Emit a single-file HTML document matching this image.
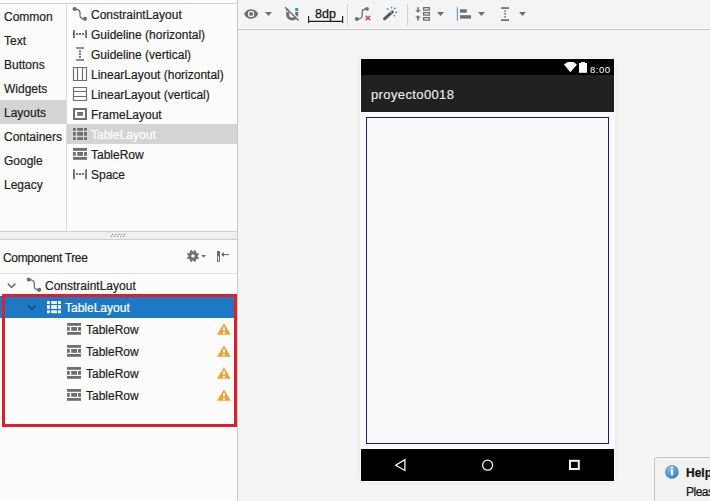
<!DOCTYPE html>
<html><head><meta charset="utf-8">
<style>
*{box-sizing:border-box;margin:0;padding:0}
html,body{width:710px;height:501px;overflow:hidden;background:#f5f5f5;font-family:"Liberation Sans",sans-serif;font-size:12px;color:#1e1e1e}
.a{position:absolute}
.t{position:absolute;white-space:nowrap;line-height:14px;height:14px;-webkit-text-stroke:0.2px currentColor}
svg{position:absolute;overflow:visible}
</style></head><body>
<!-- LEFT PANEL -->
<div class="a" style="left:0;top:0;width:237px;height:501px;background:#fcfcfc"></div>
<div class="a" style="left:0;top:3px;width:237px;height:1px;background:#cfcfcf"></div>
<div class="a" style="left:237px;top:0;width:1px;height:501px;background:#c8c8c8"></div>
<!-- categories -->
<div class="a" style="left:66px;top:4px;width:1px;height:227px;background:#d9d9d9"></div>
<div class="a" style="left:0;top:100px;width:66px;height:24px;background:#d4d4d4"></div>
<div class="t" style="left:4px;top:10px">Common</div>
<div class="t" style="left:4px;top:34px">Text</div>
<div class="t" style="left:4px;top:58px">Buttons</div>
<div class="t" style="left:4px;top:82px">Widgets</div>
<div class="t" style="left:4px;top:106px">Layouts</div>
<div class="t" style="left:4px;top:130px">Containers</div>
<div class="t" style="left:4px;top:154px">Google</div>
<div class="t" style="left:4px;top:178px">Legacy</div>
<!-- palette items -->
<div class="a" style="left:67px;top:124px;width:170px;height:20px;background:#d4d4d4"></div>
<div class="t" style="left:91px;top:8px">ConstraintLayout</div>
<div class="t" style="left:91px;top:28px">Guideline (horizontal)</div>
<div class="t" style="left:91px;top:48px">Guideline (vertical)</div>
<div class="t" style="left:91px;top:68px">LinearLayout (horizontal)</div>
<div class="t" style="left:91px;top:88px">LinearLayout (vertical)</div>
<div class="t" style="left:91px;top:108px">FrameLayout</div>
<div class="t" style="left:91px;top:128px;color:#fff">TableLayout</div>
<div class="t" style="left:91px;top:148px">TableRow</div>
<div class="t" style="left:91px;top:168px">Space</div>

<!-- splitter -->
<div class="a" style="left:0;top:231px;width:237px;height:1px;background:#cfcfcf"></div>
<div class="a" style="left:0;top:232px;width:237px;height:7px;background:#efefef"></div>
<div class="a" style="left:0;top:239px;width:237px;height:1px;background:#cfcfcf"></div>

<!-- component tree header -->
<div class="t" style="left:3px;top:251px;letter-spacing:-0.35px">Component Tree</div>
<div class="a" style="left:0;top:273px;width:237px;height:1px;background:#e0e0e0"></div>

<!-- tree -->
<div class="a" style="left:0;top:296px;width:237px;height:22px;background:#1e79c4"></div>
<div class="t" style="left:45px;top:279px">ConstraintLayout</div>
<div class="t" style="left:65px;top:301px;color:#fff">TableLayout</div>
<div class="t" style="left:86px;top:323px">TableRow</div>
<div class="t" style="left:86px;top:345px">TableRow</div>
<div class="t" style="left:86px;top:367px">TableRow</div>
<div class="t" style="left:86px;top:389px">TableRow</div>
<div class="a" style="left:2px;top:294px;width:235px;height:133px;border:3px solid #de1f2d"></div>

<!-- RIGHT: toolbar -->
<div class="a" style="left:238px;top:0;width:472px;height:29px;background:#f4f4f4"></div>
<div class="a" style="left:238px;top:28px;width:472px;height:1px;background:#f8f8f8"></div>
<div class="a" style="left:238px;top:29px;width:472px;height:1px;background:#c9c9c9"></div>

<!-- phone -->
<div class="a" style="left:360px;top:58px;width:255px;height:424px;background:#fcfcfc;box-shadow:0 0 5px rgba(0,0,0,0.07)"></div>
<div class="a" style="left:361px;top:112px;width:253px;height:337px;background:#fafafa"></div>
<div class="a" style="left:361px;top:59px;width:253px;height:16px;background:#000"></div>
<div class="a" style="left:361px;top:75px;width:253px;height:37px;background:#212121"></div>
<div class="t" style="left:371px;top:88px;font-size:13px;letter-spacing:0.38px;-webkit-text-stroke:0.15px #ececec;color:#ececec">proyecto0018</div>
<div class="a" style="left:366px;top:117px;width:243px;height:327px;border:1px solid #1a1a8a"></div>
<div class="a" style="left:361px;top:449px;width:253px;height:32px;background:#000"></div>

<div class="t" style="left:315px;top:7px;color:#111;font-size:12.5px;-webkit-text-stroke:0.25px #111">8dp</div>
<div class="t" style="left:590px;top:63px;font-size:9.5px;letter-spacing:0.5px;color:#fff;-webkit-text-stroke:0">8:00</div>
<!-- help popup -->
<div class="a" style="left:654px;top:457px;width:70px;height:60px;background:#f2f2f2;border:1px solid #c4c4c4;border-radius:3px"></div>
<div class="t" style="left:686px;top:466px;font-weight:bold;color:#111">Help</div>
<div class="t" style="left:686px;top:485px;color:#111;letter-spacing:-0.5px">Pleas</div>

<svg width="710" height="501" viewBox="0 0 710 501" style="left:0;top:0">
<g fill="#6e6e6e" stroke="none">
 <!-- palette: constraint -->
 <circle cx="74.6" cy="9" r="2.1"/><circle cx="85" cy="18.8" r="2.1"/>
 <path d="M74.6 9 C78.5 9.2 80 10 80 12.5 V15.5 C80 18 81.5 18.8 85 18.8" fill="none" stroke="#6e6e6e" stroke-width="1.3"/>
 <!-- guideline h -->
 <rect x="73" y="30" width="1.9" height="8"/><rect x="85.1" y="30" width="1.9" height="8"/>
 <rect x="76.1" y="33" width="2" height="2"/><rect x="79" y="33" width="2" height="2"/><rect x="82" y="33" width="2" height="2"/>
 <!-- guideline v -->
 <rect x="76.2" y="47.2" width="7.8" height="1.6"/><rect x="76.2" y="59.2" width="7.8" height="1.6"/>
 <rect x="79" y="50.4" width="2" height="1.8"/><rect x="79" y="53.2" width="2" height="1.8"/><rect x="79" y="56" width="2" height="1.8"/>
 <!-- linear h -->
 <path d="M73.5 67.5 H86.5 V80.5 H73.5 Z M77.5 67.5 V80.5 M82.5 67.5 V80.5" fill="none" stroke="#6e6e6e" stroke-width="1.15"/>
 <!-- linear v -->
 <path d="M73.5 87.5 H86.5 V100.5 H73.5 Z M73.5 91.5 H86.5 M73.5 96.5 H86.5" fill="none" stroke="#6e6e6e" stroke-width="1.15"/>
 <!-- frame -->
 <path d="M73 108 H87 V120 H73 Z M75 110 V118 H85 V110 Z" fill-rule="evenodd"/>
 <rect x="77.2" y="112" width="5.8" height="3.8"/>
 <!-- table layout -->
 <g id="tl">
 <rect x="73" y="128" width="2.8" height="2.7"/><rect x="77.2" y="128" width="5.8" height="2.7"/><rect x="84" y="128" width="3" height="2.7"/>
 <rect x="73" y="132" width="2.8" height="3.7"/><rect x="77.2" y="132" width="5.8" height="3.7"/><rect x="84" y="132" width="3" height="3.7"/>
 <rect x="73" y="137.2" width="2.8" height="2.8"/><rect x="77.2" y="137.2" width="5.8" height="2.8"/><rect x="84" y="137.2" width="3" height="2.8"/>
 </g>
 <!-- table row -->
 <g id="tr">
 <rect x="73" y="148" width="14" height="2.8"/>
 <rect x="73" y="152" width="2.8" height="3.8"/><rect x="77.2" y="152" width="5.8" height="3.8"/><rect x="84" y="152" width="3" height="3.8"/>
 <rect x="73" y="157" width="14" height="2.8"/>
 </g>
 <!-- space -->
 <rect x="73" y="169.2" width="1.9" height="10"/><rect x="85.1" y="169.2" width="1.9" height="10"/>
 <rect x="76.1" y="173" width="2" height="2"/><rect x="79" y="173" width="2" height="2"/><rect x="82" y="173" width="2" height="2"/>

 <!-- splitter dots -->
 <g fill="#8a8a8a">
 <rect x="112" y="233.8" width="1.2" height="1.2"/><rect x="115" y="233.8" width="1.2" height="1.2"/><rect x="118" y="233.8" width="1.2" height="1.2"/><rect x="121" y="233.8" width="1.2" height="1.2"/><rect x="124" y="233.8" width="1.2" height="1.2"/>
 <rect x="111" y="235.8" width="1.2" height="1.2"/><rect x="114" y="235.8" width="1.2" height="1.2"/><rect x="117" y="235.8" width="1.2" height="1.2"/><rect x="120" y="235.8" width="1.2" height="1.2"/><rect x="123" y="235.8" width="1.2" height="1.2"/>
 </g>

 <!-- gear -->
 <g transform="translate(193 256) rotate(22.5)">
  <path d="M4.50 -1.15 L6.00 -1.15 L6.00 1.15 L4.50 1.15 A4.50 4.50 0 0 1 4.00 2.37 L5.06 3.43 L3.43 5.06 L2.37 4.00 A4.50 4.50 0 0 1 1.15 4.50 L1.15 6.00 L-1.15 6.00 L-1.15 4.50 A4.50 4.50 0 0 1 -2.37 4.00 L-3.43 5.06 L-5.06 3.43 L-4.00 2.37 A4.50 4.50 0 0 1 -4.50 1.15 L-6.00 1.15 L-6.00 -1.15 L-4.50 -1.15 A4.50 4.50 0 0 1 -4.00 -2.37 L-5.06 -3.43 L-3.43 -5.06 L-2.37 -4.00 A4.50 4.50 0 0 1 -1.15 -4.50 L-1.15 -6.00 L1.15 -6.00 L1.15 -4.50 A4.50 4.50 0 0 1 2.37 -4.00 L3.43 -5.06 L5.06 -3.43 L4.00 -2.37 A4.50 4.50 0 0 1 4.50 -1.15 Z M0 -1.7 A1.7 1.7 0 1 0 0 1.7 A1.7 1.7 0 1 0 0 -1.7 Z" fill-rule="evenodd"/>
 </g>
 <path d="M201.3 255 H206 L203.6 257.8 Z"/>
 <!-- collapse -->
 <path d="M217 251 H220 V261.8 H217 Z M218 256.2 V260.8 H219 V256.2 Z" fill-rule="evenodd"/>
 <path d="M221 254.5 L224 252 V257 Z"/><rect x="223" y="254" width="6" height="1.1"/>

 <!-- tree chevrons -->
 <path d="M7.8 283.6 L11.6 287.4 L15.4 283.6" fill="none" stroke="#6e6e6e" stroke-width="1.5"/>
 <path d="M28 305.6 L31.8 309.2 L35.6 305.6" fill="none" stroke="#0d4a85" stroke-width="1.6"/>
 <!-- tree constraint -->
 <circle cx="28.8" cy="279.6" r="2.1"/><circle cx="39.2" cy="289.8" r="2.1"/>
 <path d="M28.8 279.6 C32.8 279.8 34.3 280.6 34.3 283 V286.5 C34.3 289 35.8 289.8 39.2 289.8" fill="none" stroke="#6e6e6e" stroke-width="1.3"/>
 <!-- tree table layout (white) -->
 <use href="#tl" transform="translate(-26 173.2)" fill="#fff"/>
 <!-- tree table rows -->
 <use href="#tr" transform="translate(-6 175)"/>
 <use href="#tr" transform="translate(-6 197)"/>
 <use href="#tr" transform="translate(-6 219)"/>
 <use href="#tr" transform="translate(-6 241)"/>
</g>
<!-- warnings -->
<g id="warn">
 <path d="M224 323.3 L230.8 334.8 H217 Z" fill="#eea236"/>
 <rect x="222.9" y="327.2" width="2.1" height="3.4" fill="#fff"/><rect x="222.9" y="332" width="2.1" height="1.8" fill="#fff"/>
</g>
<use href="#warn" transform="translate(0 22)"/>
<use href="#warn" transform="translate(0 44)"/>
<use href="#warn" transform="translate(0 66)"/>

<!-- TOOLBAR -->
<g fill="#6e6e6e">
 <g transform="translate(243.47 6.27) scale(0.636)">
  <path d="M12 4.5C7 4.5 2.73 7.61 1 12c1.73 4.39 6 7.5 11 7.5s9.27-3.11 11-7.5c-1.73-4.39-6-7.5-11-7.5z"/>
  <circle cx="12" cy="12" r="5" fill="#f4f4f4"/><circle cx="12" cy="12" r="3.1"/>
 </g>
 <path d="M265 12 H272 L268.5 16 Z"/>
 <path d="M437 12 H444 L440.5 16 Z"/>
 <path d="M478 12 H485 L481.5 16 Z"/>
 <path d="M519 12 H526 L522.5 16 Z"/>
 <!-- magnet -->
 <path d="M286.2 12 V15 A6 5.4 0 0 0 298.2 15 V12 H295.2 V15 A3 2.6 0 0 1 289.2 15 V12 Z"/>
 <rect x="295.2" y="8" width="3" height="3" fill="#3592d0"/>
 <rect x="286.2" y="8" width="3" height="3" fill="#4d6e84"/>
 <path d="M286 6.4 L299.6 20" stroke="#f4f4f4" stroke-width="1.6"/>
 <path d="M285.2 7.2 L298.6 20.6" stroke="#6a6a6a" stroke-width="1.4"/>
 <!-- 8dp bracket -->
 <path d="M308.6 16 V23 M308.6 21.4 H343 M342.6 16 V23" fill="none" stroke="#1e1e1e" stroke-width="1.2"/>
 <!-- separators -->
 <rect x="347" y="4" width="1" height="21.5" fill="#d2d2d2"/>
 <rect x="407" y="4" width="1" height="21.5" fill="#d2d2d2"/>
 <!-- clear constraints -->
 <circle cx="356.8" cy="19" r="1.9"/><circle cx="367" cy="8.8" r="1.9"/>
 <path d="M356.8 19 C360.5 19 362.2 18.2 362.2 15.5 V12.3 C362.2 9.6 363.5 8.8 367 8.8" fill="none" stroke="#6e6e6e" stroke-width="1.3"/>
 <path d="M365.6 15.8 L370.4 20.2 M370.4 15.8 L365.6 20.2" stroke="#c9385d" stroke-width="1.4"/>
 <!-- wand -->
 <path d="M384.5 18.8 L392.3 11.8" stroke="#5a5a5a" stroke-width="3" stroke-linecap="round"/>
 <rect x="390.6" y="11.6" width="1.2" height="1.2" fill="#ddd"/>
 <g stroke="#3d7fb1" stroke-width="1.2">
  <path d="M387.2 8.4 L388.4 9.8"/><path d="M391.6 6.8 V8.6"/><path d="M395.6 7.6 L394.4 9"/><path d="M395.2 12.4 H397.2"/><path d="M393.8 15.2 L395 16.4"/>
 </g>
 <!-- pack -->
 <rect x="417.2" y="7.2" width="1.6" height="3.4"/><path d="M415.2 10.2 H420.8 L418 12.8 Z"/>
 <rect x="417.2" y="17.4" width="1.6" height="3.2"/><path d="M415.2 17.8 H420.8 L418 15.2 Z"/>
 <path d="M423.6 7.6 H429.4 V10.2 H423.6 Z M423.6 12.6 H429.4 V15.2 H423.6 Z M423.6 17.6 H429.4 V20.2 H423.6 Z" fill="none" stroke="#6e6e6e" stroke-width="1.3"/>
 <!-- align -->
 <rect x="456.8" y="7.2" width="1.1" height="13.5" fill="#4c9ad4"/>
 <rect x="460" y="9.3" width="6.8" height="3.4"/><rect x="460" y="15.2" width="11" height="3.4"/>
 <!-- guideline tool -->
 <rect x="501" y="7.2" width="8" height="1.7"/><rect x="501" y="19.3" width="8" height="1.7"/>
 <rect x="504.3" y="10.3" width="1.6" height="1.5"/><rect x="504.3" y="13.2" width="1.6" height="1.5"/><rect x="504.3" y="16.1" width="1.6" height="1.5"/>
</g>

<!-- PHONE ICONS -->
<g fill="#fff">
 <path d="M563.9 64.4 L567.6 62 H573.4 L577 64.4 L570.4 72.2 Z"/>
 <rect x="579" y="63" width="8" height="9.8"/><rect x="581" y="62" width="4" height="1.2"/>
</g>
<g fill="none" stroke="#f4f4f4" stroke-width="1.3">
 <path d="M404.9 459.7 V470.5 L395.7 465.3 Z"/>
 <circle cx="487.6" cy="465.2" r="5"/>
 <rect x="570" y="460.8" width="8.8" height="8.2" stroke-width="2"/>
</g>
<!-- info icon -->
<defs><radialGradient id="ig" cx="0.4" cy="0.3" r="0.8"><stop offset="0" stop-color="#8cc0e6"/><stop offset="1" stop-color="#2f77b0"/></radialGradient></defs>
<circle cx="671.9" cy="471.9" r="6.8" fill="url(#ig)"/>
<rect x="671" y="466.6" width="1.9" height="1.9" fill="#fff"/><rect x="671" y="469.6" width="1.9" height="5.8" fill="#fff"/>
</svg>
</body></html>
